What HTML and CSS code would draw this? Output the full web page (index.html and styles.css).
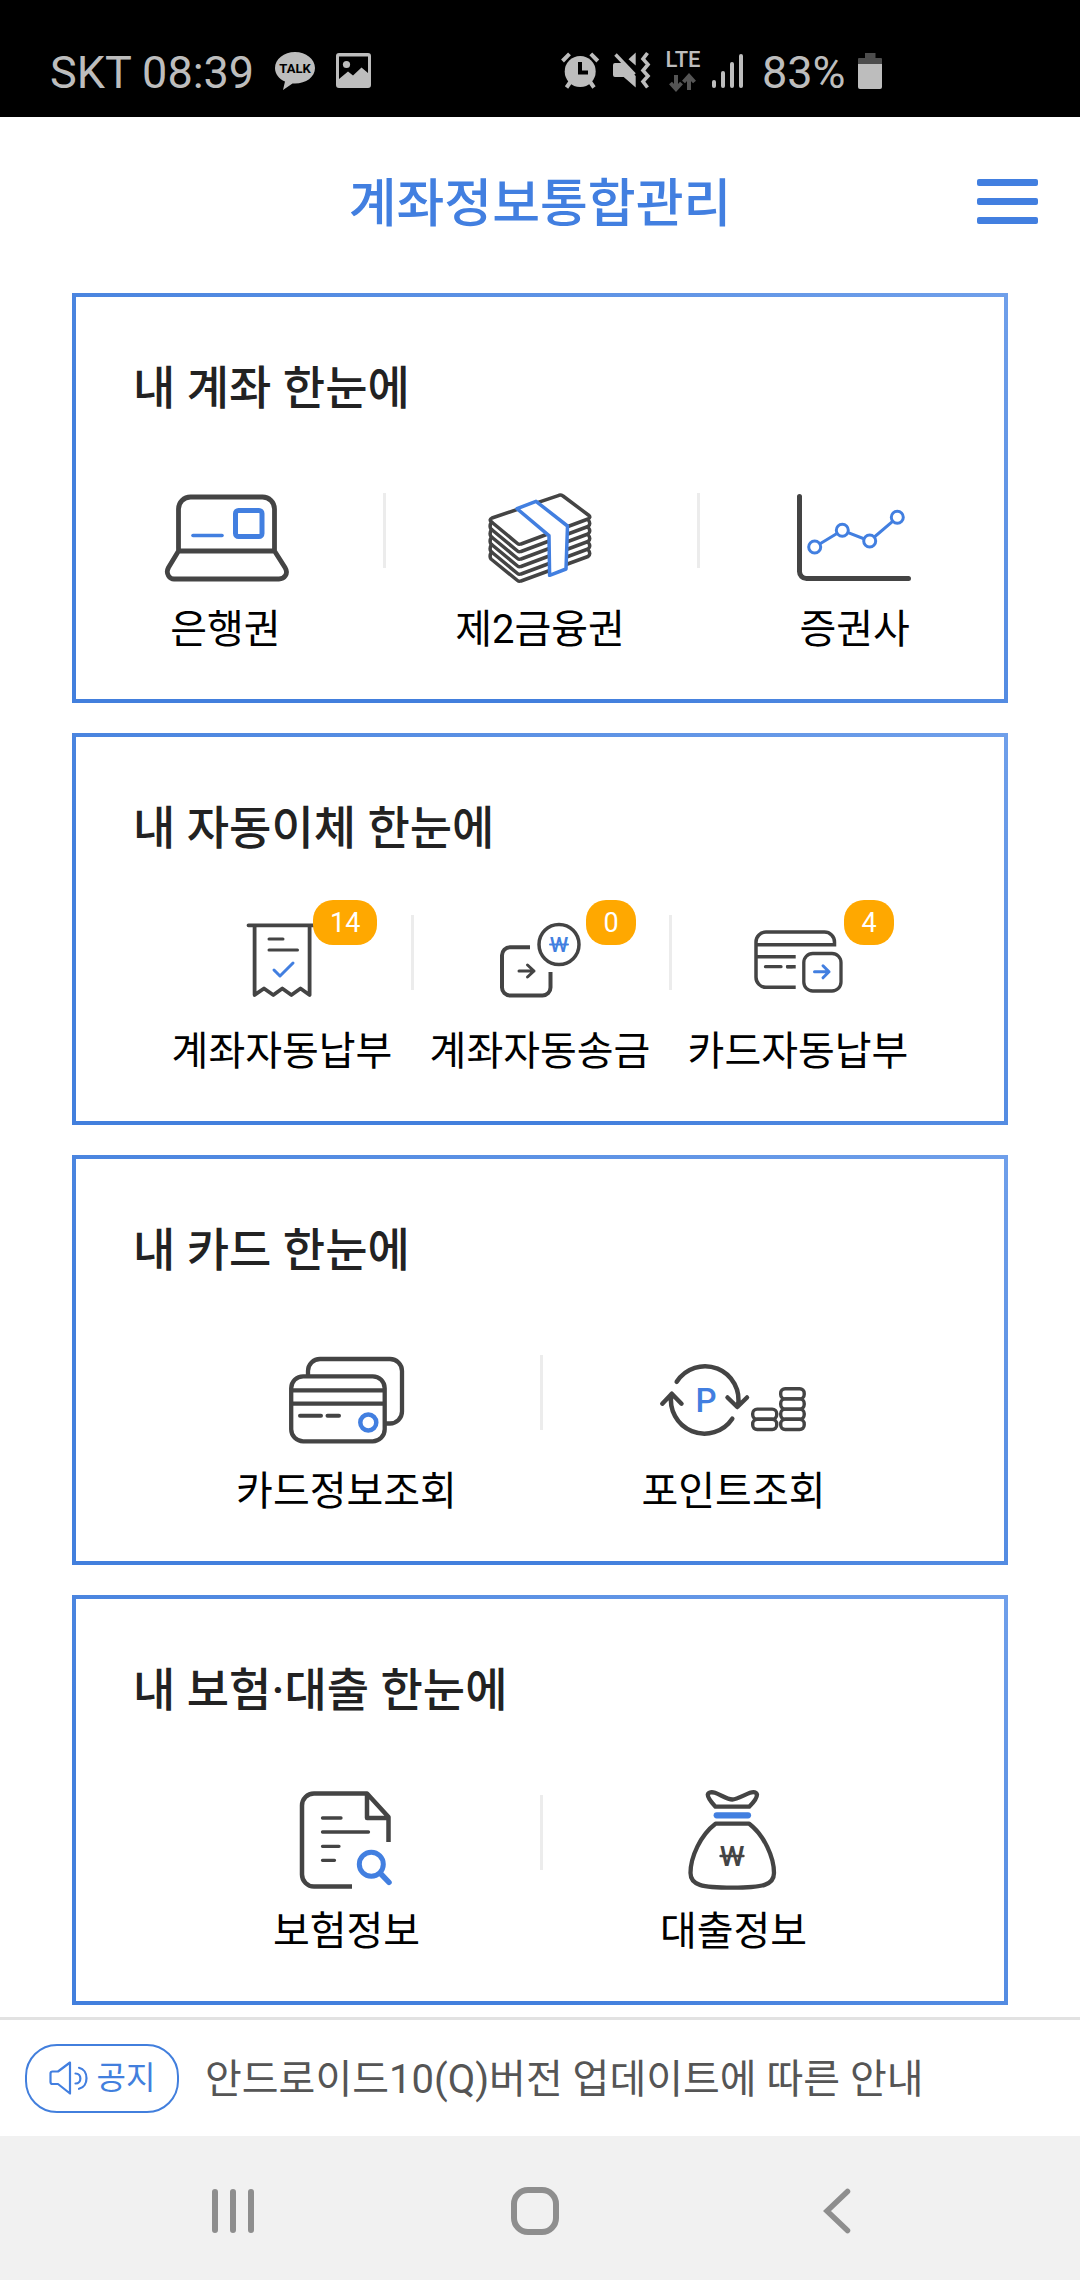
FILE: index.html
```html
<!DOCTYPE html>
<html lang="ko">
<head>
<meta charset="utf-8">
<meta name="viewport" content="width=device-width, initial-scale=1">
<title>계좌정보통합관리</title>
<link rel="stylesheet" href="styles.css">
</head>
<body>
<div class="status">
  <div class="status-group status-left">
    <span class="status-text">SKT 08:39</span>
    <svg class="glyph" width="40" height="38" viewBox="0 0 40 38" aria-hidden="true">
      <path class="fill" d="M20 0C9 0 0 7 0 16c0 6 4 11 10 13.500L8 38l9.500-6.500H20c11 0 20-6.500 20-15.500S31 0 20 0z"/>
      <text class="talk" x="20" y="21" text-anchor="middle">TALK</text>
    </svg>
    <svg class="glyph" width="35" height="35" viewBox="0 0 35 35" aria-hidden="true">
      <path class="fill" fill-rule="evenodd" d="M3 0H32a3 3 0 0 1 3 3V32a3 3 0 0 1-3 3H3a3 3 0 0 1-3-3V3a3 3 0 0 1 3-3zM3 3.500V26L12 18.500L17 22.500L25.500 14.500L32 20V3.500z"/>
      <circle class="fill" cx="10.500" cy="11.500" r="3.600"/>
    </svg>
  </div>
  <div class="status-group status-right">
    <svg class="glyph" width="40" height="37" viewBox="0 0 40 37" aria-hidden="true">
      <circle class="fill" cx="19.200" cy="19.500" r="15.500"/>
      <path class="line" stroke-width="4" d="M1.500 9L8.500 1.800M29.800 1.800L36.800 9M5.500 35.500L10 29M33 35.500L28.500 29"/>
      <path class="cut" stroke-width="4" d="M19 10V20.500H27"/>
    </svg>
    <svg class="glyph" width="41" height="37" viewBox="0 0 41 37" aria-hidden="true">
      <path class="fill" d="M22.700.5V13.500L15.500 7.300zM2 11H9.500L22.700 24V35.500L10.700 25H2a2 2 0 0 1-2-2V13a2 2 0 0 1 2-2z"/>
      <path class="line" stroke-width="3.400" d="M2.500 2.500L21.500 22.500"/>
      <path class="line" stroke-width="3.600" d="M34.500 1L30 7L35 12.500L30 18.500L35 24L30 29.500L34.500 35.500"/>
    </svg>
    <span class="lte">
      <span>LTE</span>
      <svg width="28" height="17" viewBox="0 0 28 17" aria-hidden="true">
        <path class="dim" d="M7 1V15M1.500 9L7 15L12.500 9M20 16V2M14.500 8L20 2L25.500 8"/>
      </svg>
    </span>
    <svg class="glyph" width="38" height="34" viewBox="0 0 38 34" aria-hidden="true">
      <g class="fill"><rect y="26" width="4" height="8" rx="2"/><rect x="9" y="17" width="4" height="17" rx="2"/><rect x="18" y="8" width="4" height="26" rx="2"/><rect x="27" width="4" height="34" rx="2"/></g>
    </svg>
    <span class="status-text">83%</span>
    <svg class="glyph" width="24" height="36" viewBox="0 0 24 36" aria-hidden="true">
      <path fill="#4d4d4d" d="M7 0H17.500V5H23a1 1 0 0 1 1 1V12H0V6a1 1 0 0 1 1-1H7z"/>
      <path class="fill" d="M0 11H24V34a2 2 0 0 1-2 2H2a2 2 0 0 1-2-2z"/>
    </svg>
  </div>
</div>

<header class="header">
  <h1 class="title">계좌정보통합관리</h1>
  <button class="menu" type="button" aria-label="메뉴"><span></span><span></span><span></span></button>
</header>

<main class="cards">
  <section class="card">
    <h2 class="card-title">내 계좌 한눈에</h2>
    <ul class="items items-wide">
      <li><a class="item" href="#bank">
        <span class="icon">
          <svg width="121" height="88" viewBox="0 0 121 88" aria-hidden="true">
            <g class="ink" stroke-width="4.800"><path d="M13.500 57V15a12 12 0 0 1 12-12H97.500a12 12 0 0 1 12 12V57zM13.500 57L3.500 73.500C0 80 5 85 9 85H114C119 85 124 80 120 73.500L109.500 57"/></g>
            <rect class="blue" stroke-width="5" x="70.500" y="16.500" width="26.500" height="26" rx="3"/>
            <path class="blue" stroke-width="3.600" d="M28 41.500H57"/>
          </svg>
        </span>
        <span class="label">은행권</span></a></li>
      <li><a class="item" href="#second">
        <span class="icon">
          <svg width="104" height="90" viewBox="0 0 104 90" aria-hidden="true">
            <g class="ink" stroke-width="3.500">
              <path d="M4 25L71 2.300Q73 1.700 75 3L101 22.500Q103 24.500 100 26L33 51Q31 51.800 29.500 50.500L3 28.500Q1 26.500 4 25z"/>
              <path d="M3.500 29Q1 33 3 36L29.500 58Q31 59.300 33 58.500L100 33.500Q103.500 31 100 26.500"/>
              <path d="M3.500 36.500Q1 40.500 3 43.500L29.500 65.500Q31 66.800 33 66L100 41Q103.500 38.500 100 34"/>
              <path d="M3.500 44Q1 48 3 51L29.500 73Q31 74.300 33 73.500L100 48.500Q103.500 46 100 41.500"/>
              <path d="M3.500 51.500Q1 55.500 3 58.500L29.500 80.500Q31 81.800 33 81L100 56Q103.500 53.500 100 49"/>
              <path d="M3.500 59Q1 63 3 66L29.500 87.500Q31 88.800 33 88L100 63.500Q103.500 61 100 56.500"/>
            </g>
            <path class="blue paper" stroke-width="3.500" d="M29 15.700L48 8.300L79.500 33L78 76L61.600 82.300L61 42.700z"/>
          </svg>
        </span>
        <span class="label">제2금융권</span></a></li>
      <li><a class="item" href="#stock">
        <span class="icon">
          <svg width="116" height="88" viewBox="0 0 116 88" aria-hidden="true">
            <path class="ink" stroke-width="5" d="M2.500 2.500V77.500a7 7 0 0 0 7 7H111.500"/>
            <path class="blue" stroke-width="3" d="M17.700 53L45.300 36.300L72.700 47L100.300 23.300"/>
            <g class="blue paper" stroke-width="3"><circle cx="17.700" cy="53" r="6"/><circle cx="45.300" cy="36.300" r="6"/><circle cx="72.700" cy="47" r="6"/><circle cx="100.300" cy="23.300" r="6"/></g>
          </svg>
        </span>
        <span class="label">증권사</span></a></li>
    </ul>
  </section>

  <section class="card card-compact">
    <h2 class="card-title">내 자동이체 한눈에</h2>
    <ul class="items">
      <li><a class="item" href="#account-pay">
        <span class="icon">
          <svg width="62" height="76" viewBox="0 0 62 76" aria-hidden="true">
            <path class="ink" stroke-width="3.800" d="M-2.500 3.300H64.500M3.600 3.300V73L13 66.500L22.300 73L31.300 66.500L40.400 73L49.500 66.500L58.600 73V3.300"/>
            <path class="ink" stroke-width="3" d="M18 17H32M18 28H46.500"/>
            <path class="blue" stroke-width="3" d="M23 48L29 54L42 41"/>
          </svg>
          <span class="badge">14</span>
        </span>
        <span class="label">계좌자동납부</span></a></li>
      <li><a class="item" href="#account-transfer">
        <span class="icon">
          <svg width="92" height="76" viewBox="0 0 92 76" aria-hidden="true">
            <path class="ink butt" stroke-width="4" d="M36 25.300H16a8 8 0 0 0-8 8V65.500a8 8 0 0 0 8 8H48.500a8 8 0 0 0 8-8V50"/>
            <path class="ink" stroke-width="3" d="M25 49H40M33.500 43L40 49L33.500 55"/>
            <circle class="ink" stroke-width="3.500" cx="65" cy="22.500" r="20"/>
            <text class="won won-blue" x="65" y="30" text-anchor="middle">W</text>
            <path class="blue" stroke-width="2" d="M56 22.500H74"/>
          </svg>
          <span class="badge">0</span>
        </span>
        <span class="label">계좌자동송금</span></a></li>
      <li><a class="item" href="#card-pay">
        <span class="icon">
          <svg width="92" height="76" viewBox="0 0 92 76" aria-hidden="true">
            <path class="ink butt" stroke-width="3.500" d="M43.700 65.300H14a10 10 0 0 1-10-10V20a10 10 0 0 1 10-10H72.500a10 10 0 0 1 10 10V24.500M4 22.700H84M4 34.700H43.700M34.500 44.700H43.700"/>
            <path class="ink" stroke-width="3.300" d="M13.500 44.700H29M35.500 44.700H40"/>
            <rect class="ink" stroke-width="3.300" x="51.800" y="31.500" width="37.200" height="37.500" rx="9"/>
            <path class="blue" stroke-width="3" d="M62.500 49.800H77M71 43.800L77 49.800L71 55.800"/>
          </svg>
          <span class="badge">4</span>
        </span>
        <span class="label">카드자동납부</span></a></li>
    </ul>
  </section>

  <section class="card">
    <h2 class="card-title">내 카드 한눈에</h2>
    <ul class="items items-two">
      <li><a class="item" href="#card-info">
        <span class="icon">
          <svg width="115" height="87" viewBox="0 0 115 87" aria-hidden="true">
            <path class="ink butt" stroke-width="4.300" d="M19 19V14a12 12 0 0 1 12-12H101a12 12 0 0 1 12 12V54.500a12 12 0 0 1-12 12H96M2 33.300H96M2 46.700H96"/>
            <rect class="ink" stroke-width="4.300" x="2.200" y="19.300" width="93.500" height="65" rx="12"/>
            <path class="ink" stroke-width="4" d="M11 58.700H32M38.500 58.700H50"/>
            <circle class="blue" stroke-width="4.500" cx="79.300" cy="65.500" r="8"/>
          </svg>
        </span>
        <span class="label">카드정보조회</span></a></li>
      <li><a class="item" href="#points">
        <span class="icon">
          <svg width="148" height="72" viewBox="0 0 148 72" aria-hidden="true">
            <path class="ink" stroke-width="4.500" d="M16.700 17.800A33.500 33.500 0 0 1 77.800 42.500M67.500 33.500L77.300 43L87 33.500M72.300 54.700A33.500 33.500 0 0 1 11.500 30M2.300 39.700L11.800 29.700L21.500 39.700"/>
            <text class="point" x="46" y="48" text-anchor="middle">P</text>
            <g class="ink" stroke-width="3.400"><rect x="120.700" y="24.700" width="23.500" height="10.200" rx="4.500"/><rect x="120.700" y="34.900" width="23.500" height="10.200" rx="4.500"/><rect x="120.700" y="45.100" width="23.500" height="10.200" rx="4.500"/><rect x="120.700" y="55.300" width="23.500" height="10.200" rx="4.500"/><rect x="92.700" y="45.100" width="24" height="10.200" rx="4.500"/><rect x="92.700" y="55.300" width="24" height="10.200" rx="4.500"/></g>
          </svg>
        </span>
        <span class="label">포인트조회</span></a></li>
    </ul>
  </section>

  <section class="card">
    <h2 class="card-title">내 보험·대출 한눈에</h2>
    <ul class="items items-two">
      <li><a class="item" href="#insurance">
        <span class="icon">
          <svg width="95" height="98" viewBox="0 0 95 98" aria-hidden="true">
            <path class="ink butt" stroke-width="4.500" d="M53 95.500H15a12 12 0 0 1-12-12V14.500a12 12 0 0 1 12-12H68L89.500 26V51M68 2.500V27H89.500"/>
            <path class="ink" stroke-width="3.300" d="M23.500 27H42M23.500 41H69.500M23.500 55.300H40M23.500 69.300H35.500"/>
            <circle class="blue" stroke-width="5" cx="72.300" cy="73.300" r="12"/>
            <path class="blue" stroke-width="5.500" d="M82 83L90 91.300"/>
          </svg>
        </span>
        <span class="label">보험정보</span></a></li>
      <li><a class="item" href="#loan">
        <span class="icon">
          <svg width="91" height="100" viewBox="0 0 91 100" aria-hidden="true">
            <g class="ink butt" stroke-width="4.300"><path d="M27.500 16.700H61.200C66 12 69 8 69 4.500C68 2 65 1.800 62 2.800C56 5 49 9.500 44.300 9.500C39.500 9.500 33 5 27 2.800C24 1.800 20.500 2 19.800 4.500C19.500 8 23 12 27.500 16.700zM27.500 33.700H61.200C76 45 86 67 86 83C86 95 75 97.700 44.300 97.700C13.500 97.700 2.500 95 2.500 83C2.500 67 12.500 45 27.500 33.700z"/></g>
            <path class="blue" stroke-width="6.200" d="M28.700 25.300H60"/>
            <text class="won won-ink" x="44" y="76" text-anchor="middle">W</text>
            <path class="ink" stroke-width="2.400" d="M32.500 66H55.500"/>
          </svg>
        </span>
        <span class="label">대출정보</span></a></li>
    </ul>
  </section>
</main>

<aside class="notice">
  <a class="notice-pill" href="#notices">
    <svg width="39" height="34" viewBox="0 0 39 34" aria-hidden="true">
      <path class="blue" stroke-width="2.200" d="M9 10.500H3.500a2 2 0 0 0-2 2V21a2 2 0 0 0 2 2H9L21 32.500V1.500zM26.500 12.500C33 12.500 33 22.500 26.500 22.500M30 6.800C40 9 40 25.500 30 27.800"/>
    </svg>
    <span>공지</span>
  </a>
  <a class="notice-text" href="#notice-android10">안드로이드10(Q)버전 업데이트에 따른 안내</a>
</aside>

<nav class="softkeys" aria-label="시스템 탐색">
  <button type="button" aria-label="최근 앱">
    <svg width="42" height="48" viewBox="0 0 42 48"><path class="key" stroke-width="6" d="M3 5V43M21 5V43M39 5V43"/></svg>
  </button>
  <button type="button" aria-label="홈">
    <svg width="48" height="48" viewBox="0 0 48 48"><rect class="key" stroke-width="6" x="3" y="3" width="42" height="42" rx="14"/></svg>
  </button>
  <button type="button" aria-label="뒤로">
    <svg width="28" height="48" viewBox="0 0 28 48"><path class="key" stroke-width="5.500" d="M24.500 4.500L4 24L24.500 43.500"/></svg>
  </button>
</nav>
</body>
</html>
```
FILE: styles.css
```css
* {
  box-sizing: border-box;
}

body {
  margin: 0;
  min-height: 100vh;
  display: flex;
  flex-direction: column;
  background: #fff;
  color: #000;
  font-family: Roboto, "Noto Sans CJK KR", sans-serif;
}

h1, h2, ul {
  margin: 0;
  padding: 0;
}

ul {
  list-style: none;
}

a {
  color: inherit;
  text-decoration: none;
}

button {
  padding: 0;
  border: 0;
  background: none;
}

svg {
  display: block;
  flex: none;
  overflow: visible;
}

/* Status bar */
.status {
  display: grid;
  grid-template-columns: 1fr 1fr;
  height: 117px;
  padding-top: 24px;
  background: #000;
  color: #bdbdbd;
}

.status-group {
  display: flex;
  align-items: center;
}

.status-left {
  gap: 21px;
  padding-left: 50px;
}

.status-right {
  gap: 12px;
  padding-left: 21px;
}

.status-text {
  padding-top: 4px;
  font-size: 45px;
  line-height: 56px;
}

.glyph .fill { fill: #bdbdbd; }
.glyph .line { fill: none; stroke: #bdbdbd; }
.glyph .cut { fill: none; stroke: #000; }

.talk {
  fill: #000;
  font-size: 13px;
  font-weight: 700;
}

.lte {
  display: flex;
  flex-direction: column;
  align-items: center;
  gap: 4px;
  width: 34px;
  font-size: 22px;
  font-weight: 500;
  line-height: 20px;
}

.dim {
  fill: none;
  stroke: #555;
  stroke-width: 4;
}

/* Header */
.header {
  display: grid;
  grid-template-columns: 1fr auto 1fr;
  align-items: center;
  height: 176px;
  padding: 0 42px 8px;
}

.title {
  grid-column: 2;
  padding-top: 8px;
  color: #427fe0;
  font-size: 52px;
  font-weight: 500;
  line-height: 64px;
}

.menu {
  justify-self: end;
  display: grid;
  gap: 12px;
  width: 61px;
}

.menu span {
  height: 7px;
  border-radius: 2px;
  background: #427fe0;
}

/* Cards */
.cards {
  flex: 1;
  display: flex;
  flex-direction: column;
  gap: 30px;
  padding: 0 72px 12px;
}

.card {
  padding: 63px 0 45px;
  border: 4px solid transparent;
  background:
    linear-gradient(#fff, #fff) padding-box,
    linear-gradient(30deg, #427fdd 30%, #6f9fea) border-box;
}

.card-title {
  padding-left: 57px;
  color: #222;
  font-size: 46px;
  font-weight: 500;
  line-height: 56px;
}

.items {
  display: grid;
  grid-template-columns: repeat(3, 1fr);
  margin-top: 73px;
  padding: 0 77px;
}

.card-compact .items {
  margin-top: 55px;
}

.items-two {
  grid-template-columns: repeat(2, 1fr);
}

.items-wide {
  margin-left: -8px;
  margin-right: -8px;
  padding: 0;
}

.items li + li {
  background: linear-gradient(#ececec, #ececec) -1px 4px / 4px 75px no-repeat;
}

.item {
  display: flex;
  flex-direction: column;
  align-items: center;
  gap: 19px;
}

.icon {
  position: relative;
  display: flex;
  align-items: center;
  height: 98px;
}

.label {
  font-size: 40px;
  line-height: 48px;
  white-space: nowrap;
}

.badge {
  position: absolute;
  top: -11px;
  left: 100%;
  min-width: 50px;
  padding: 2px 17px 0;
  border-radius: 20px;
  background: #ffa800;
  color: #fff;
  font-size: 27px;
  line-height: 43px;
  text-align: center;
}

.ink, .blue {
  fill: none;
  stroke: #444;
  stroke-linecap: round;
  stroke-linejoin: round;
}

.butt { stroke-linecap: butt; }
.blue { stroke: #427fe0; }
.paper { fill: #fff; }

.won {
  font-weight: 500;
}

.won-blue {
  fill: #427fe0;
  font-size: 21px;
}

.won-ink {
  fill: #444;
  font-size: 28px;
}

.point {
  fill: #427fe0;
  font-size: 33px;
  font-weight: 500;
}

/* Notice */
.notice {
  display: flex;
  align-items: center;
  gap: 26px;
  min-height: 119px;
  padding: 0 25px;
  border-top: 3px solid #e2e2e2;
}

.notice-pill {
  display: flex;
  align-items: center;
  justify-content: center;
  gap: 9px;
  flex: none;
  width: 154px;
  height: 69px;
  border: 2px solid #427fdd;
  border-radius: 32px;
  color: #427fdd;
  font-size: 32px;
  line-height: 40px;
}

.notice-text {
  padding-top: 4px;
  color: #555;
  font-size: 40px;
  line-height: 48px;
}

/* System navigation */
.softkeys {
  display: grid;
  grid-template-columns: repeat(3, 1fr);
  height: 144px;
  padding: 6px 92px 0 82px;
  background: #f1f1f1;
}

.softkeys button {
  display: flex;
  align-items: center;
  justify-content: center;
}

.key {
  fill: none;
  stroke: #8e8e8e;
  stroke-linecap: round;
}
```
